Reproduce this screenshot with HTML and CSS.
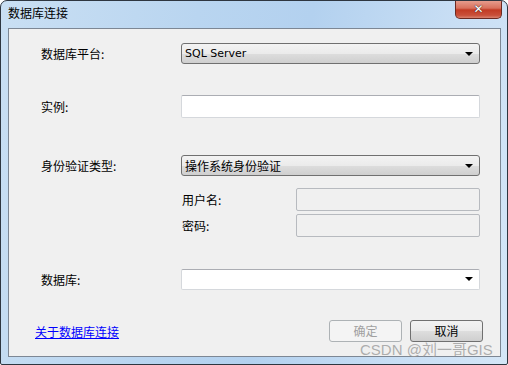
FILE: index.html
```html
<!DOCTYPE html>
<html>
<head>
<meta charset="utf-8">
<link rel="stylesheet" href="styles.css">
</head>
<body>
<div class="window">
  <div class="titlebar">
    <span class="title">数据库连接</span>
    <div class="close"><span class="x">✕</span></div>
  </div>
  <div class="client">
    <div class="row r1">
      <label class="lbl">数据库平台:</label>
      <div class="combo"><span class="latin">SQL Server</span><i class="arrow"></i></div>
    </div>
    <div class="row r2">
      <label class="lbl">实例:</label>
      <div class="input"></div>
    </div>
    <div class="row r3">
      <label class="lbl">身份验证类型:</label>
      <div class="combo"><span>操作系统身份验证</span><i class="arrow"></i></div>
    </div>
    <div class="sub s1">
      <label class="sublbl">用户名:</label>
      <div class="input disabled"></div>
    </div>
    <div class="sub s2">
      <label class="sublbl">密码:</label>
      <div class="input disabled"></div>
    </div>
    <div class="row r4">
      <label class="lbl">数据库:</label>
      <div class="input editcombo"><i class="arrow"></i></div>
    </div>
    <div class="footer">
      <a class="link" href="#">关于数据库连接</a>
      <div class="buttons">
        <div class="btn btn-disabled">确定</div>
        <div class="btn">取消</div>
      </div>
    </div>
  </div>
  <div class="watermark">CSDN @刘一哥GIS</div>
</div>
</body>
</html>
```
FILE: styles.css
```css
html, body {
  margin: 0;
  padding: 0;
  background: #ffffff;
}
body {
  font-family: "Noto Sans CJK SC", "DejaVu Sans", sans-serif;
  font-size: 12px;
  color: #000;
}
.window {
  position: relative;
  width: 508px;
  height: 365px;
  box-sizing: border-box;
  border: 1px solid #2e3640;
  border-radius: 7px 7px 2px 2px;
  background: linear-gradient(100deg, #c9dff3 0%, #b9d5f0 35%, #b3d1ef 55%, #c8def4 80%, #d4e6f7 100%);
  display: flex;
  flex-direction: column;
  overflow: hidden;
}
.titlebar {
  height: 27px;
  display: flex;
  align-items: flex-start;
  position: relative;
}
.title {
  margin-left: 7px;
  margin-top: 4px;
  font-size: 12px;
  line-height: 16px;
  color: #000;
}
.close {
  position: absolute;
  right: 5px;
  top: -1px;
  width: 47px;
  height: 19px;
  box-sizing: border-box;
  border: 1px solid #6b2a22;
  border-top: none;
  border-radius: 0 0 5px 5px;
  background: linear-gradient(180deg, #e8a293 0%, #d8715d 45%, #c23b24 55%, #c9503a 85%, #d9826f 100%);
  display: flex;
  align-items: center;
  justify-content: center;
}
.x {
  color: #fff;
  font-family: "DejaVu Sans", sans-serif;
  font-weight: bold;
  font-size: 12px;
  line-height: 12px;
  text-shadow: 0 0 1px #3a2020, 0 0 1px #3a2020;
}
.client {
  flex: 1;
  margin: 0 6px 7px 7px;
  border: 1px solid #7d8794;
  background: #f0f0f0;
  position: relative;
}
.row {
  display: flex;
  align-items: center;
  padding-left: 32px;
}
.lbl {
  width: 140px;
  flex: none;
}
.r1 { margin-top: 14px; }
.r2 { margin-top: 31px; }
.r3 { margin-top: 37px; }
.r4 { margin-top: 32px; }
.combo {
  width: 299px;
  height: 21px;
  box-sizing: border-box;
  border: 1px solid #707070;
  border-radius: 3px;
  background: linear-gradient(180deg, #f3f3f3 0%, #ebebeb 50%, #dddddd 52%, #cfcfcf 100%);
  display: flex;
  align-items: center;
  padding-left: 3px;
  position: relative;
}
.combo .latin {
  font-family: "DejaVu Sans", sans-serif;
  font-size: 11px;
}
.arrow {
  position: absolute;
  right: 6px;
  top: 8px;
  width: 0;
  height: 0;
  border-left: 4px solid transparent;
  border-right: 4px solid transparent;
  border-top: 4px solid #000;
}
.input {
  width: 299px;
  height: 23px;
  box-sizing: border-box;
  border: 1px solid #d5d8dc;
  border-top-color: #abadb3;
  border-radius: 2px;
  background: #fff;
  position: relative;
}
.sub {
  display: flex;
  align-items: center;
  padding-left: 173px;
}
.sublbl {
  width: 114px;
  flex: none;
}
.s1 { margin-top: 12px; }
.s2 { margin-top: 3px; }
.input.disabled {
  width: 184px;
  background: #f0f0f0;
  border-color: #b7babf;
}
.editcombo {
  height: 21px;
}
.editcombo .arrow { top: 7px; }
.footer {
  display: flex;
  align-items: center;
  justify-content: space-between;
  margin-top: 30px;
  padding-left: 26px;
  padding-right: 17px;
}
.link {
  color: #0000ff;
  text-decoration: underline;
}
.buttons {
  display: flex;
  gap: 8px;
}
.btn {
  width: 73px;
  height: 22px;
  box-sizing: border-box;
  border: 1px solid #707070;
  border-radius: 3px;
  background: linear-gradient(180deg, #f2f2f2 0%, #ebebeb 50%, #dddddd 52%, #cfcfcf 100%);
  display: flex;
  align-items: center;
  justify-content: center;
  line-height: 14px;
}
.btn-disabled {
  border-color: #adb2b5;
  background: #f4f4f4;
  color: #a0a0a0;
}
.watermark {
  position: absolute;
  left: 359px;
  top: 337px;
  font-family: "Liberation Sans", "Noto Sans CJK SC", sans-serif;
  font-size: 15px;
  color: rgba(150, 150, 150, 0.75);
  white-space: nowrap;
}
```
